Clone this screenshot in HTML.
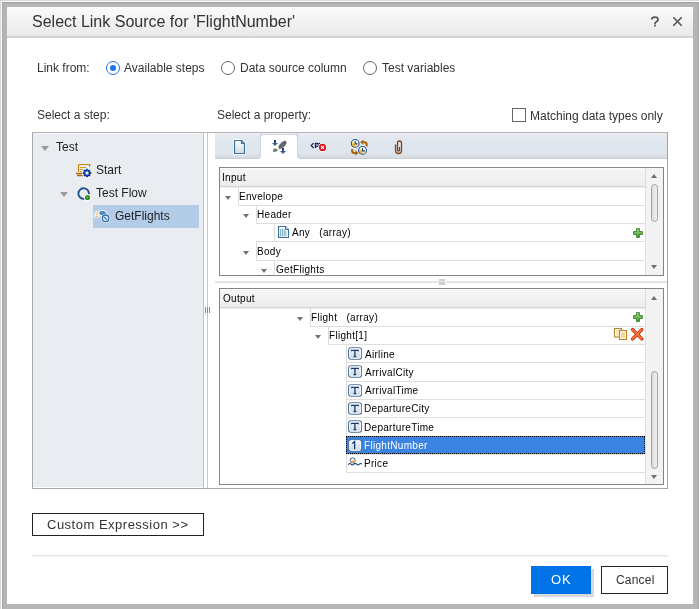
<!DOCTYPE html>
<html><head><meta charset="utf-8">
<style>
*{margin:0;padding:0;box-sizing:border-box}
html,body{width:699px;height:609px;overflow:hidden;background:#fff}
body{position:relative;font-family:"Liberation Sans",sans-serif;color:#333}
.a{position:absolute}
.t{position:absolute;white-space:nowrap;line-height:1}
#f0{left:0;top:0;width:699px;height:609px;background:#d8d8d8}
#f1{left:1px;top:1px;width:698px;height:608px;background:#fdfdfd}
#f2{left:2px;top:2px;width:697px;height:607px;background:#b5b5b5;border-top:1px solid #9e9e9e;border-left:1px solid #a8a8a8;border-right:1px solid #a9a9a9}
#dlg{left:7px;top:7px;width:686px;height:597px;background:#fff}
#title{left:7px;top:7px;width:686px;height:31px;background:linear-gradient(#fbfbfb,#e9e9e9);border-bottom:2px solid #d3d3d3}
.lbl{font-size:12px;color:#333}
.radio{position:absolute;width:14px;height:14px;border-radius:50%;border:1px solid #666;background:#fff}
.radio.on{border:1.5px solid #1a73e8}
.radio.on:after{content:"";position:absolute;left:2.5px;top:2.5px;width:6px;height:6px;border-radius:50%;background:#1a73e8}
#leftp{left:32px;top:132px;width:172px;height:357px;background:#e9ecf1;border:1px solid #b4b4b4;border-right:1px solid #c4c4c4;border-bottom:1px solid #a0a0a0}
#rightp{left:207px;top:132px;width:461px;height:357px;background:#fff;border-top:1px solid #b4b4b4;border-left:1px solid #c8c8c8;border-right:1px solid #9a9a9a;border-bottom:1px solid #a0a0a0}
#tabs{left:215px;top:133px;width:452px;height:26px;background:linear-gradient(#e9edf2,#dde4ec);border-bottom:1px solid #c9cdd3}
#acttab{left:260px;top:134px;width:37px;height:25px;background:#fff;border-radius:4px 4px 0 0;border:1px solid #cfd5dc;border-bottom:none}
.tb{position:absolute;background:#fff;border:1px solid #80868e}
.hd{position:absolute;background:linear-gradient(#f6f6f6,#ededed)}
.sb{position:absolute;background:#f3f3f3}
.gl{position:absolute;background:#dedede}
.tx{position:absolute;font-size:10px;letter-spacing:0.3px;color:#000;white-space:nowrap;line-height:1}
.tri{position:absolute;width:0;height:0;border-left:3.5px solid transparent;border-right:3.5px solid transparent;border-top:4px solid #6f747a}
.ltri{position:absolute;width:0;height:0;border-left:4.5px solid transparent;border-right:4.5px solid transparent;border-top:5px solid #9a9a9a}
.up{position:absolute;width:0;height:0;border-left:3.5px solid transparent;border-right:3.5px solid transparent;border-bottom:4px solid #6a6f75}
.dn{position:absolute;width:0;height:0;border-left:3.5px solid transparent;border-right:3.5px solid transparent;border-top:4px solid #6a6f75}
.th{position:absolute;width:7px;border:1px solid #9ea4ab;border-radius:4px;background:linear-gradient(90deg,#dcdcdc,#f2f2f2)}
.tabbg{background:linear-gradient(#eef0f3 0px,#e8ebef 2px,#e1e7ee 6px,#dfe5ec 20px,#d7dce2 24px)}
.btn{position:absolute;border:1px solid #222;background:#fff}
</style></head><body><div id="root" style="position:absolute;left:0;top:0;width:699px;height:609px;will-change:transform">
<div id="f0" class="a"></div>
<div id="f1" class="a"></div>
<div id="f2" class="a"></div>
<div id="dlg" class="a"></div>
<div class="a" style="left:681px;top:0;width:8px;height:1px;background:#d5dcea"></div>
<div id="title" class="a"></div>
<div class="t" style="left:32px;top:14px;font-size:16px;color:#333">Select Link Source for 'FlightNumber'</div>
<svg class="a" style="left:649px;top:15px" width="12" height="13" viewBox="0 0 12 13"><path d="M2.7 4.6Q2.7 2.2 5.9 2.2Q9 2.2 9 4.5Q9 5.9 7.4 6.8Q6 7.6 6 8.8V9.2" fill="none" stroke="#555" stroke-width="1.7"/><rect x="5.1" y="9.8" width="1.8" height="1.7" fill="#555"/></svg>
<svg class="a" style="left:672px;top:16px" width="11" height="11"><path d="M1.3 1.3L9.7 9.7M9.7 1.3L1.3 9.7" stroke="#555" stroke-width="1.6"/></svg>

<div class="t lbl" style="left:37px;top:62px">Link from:</div>
<div class="radio on" style="left:106px;top:61px"></div>
<div class="t lbl" style="left:124px;top:62px">Available steps</div>
<div class="radio" style="left:221px;top:61px"></div>
<div class="t lbl" style="left:240px;top:62px">Data source column</div>
<div class="radio" style="left:363px;top:61px"></div>
<div class="t lbl" style="left:382px;top:62px">Test variables</div>

<div class="t lbl" style="left:37px;top:109px">Select a step:</div>
<div class="t lbl" style="left:217px;top:109px">Select a property:</div>
<div class="a" style="left:512px;top:108px;width:14px;height:14px;border:1.5px solid #666;background:#fff"></div>
<div class="t lbl" style="left:530px;top:110px">Matching data types only</div>

<div class="a" style="left:32px;top:132px;width:636px;height:357px;background:#fff;border:1px solid #b4b4b4;border-left-color:#a8a8a8;border-right-color:#a4a4a4;border-bottom-color:#a4a4a4"></div>
<div class="a" style="left:33px;top:133px;width:170px;height:354px;background:#e9ecf1;border-top:1px solid #f2f5f9;border-left:1px solid #eef1f5"></div>
<div class="a" style="left:203px;top:133px;width:1px;height:355px;background:#c4c4c4"></div>
<div class="a" style="left:207px;top:133px;width:1px;height:355px;background:#c8c8c8"></div>
<div class="a" style="left:260px;top:133px;width:38px;height:3px;background:#eaedf1"></div>
<div class="a" style="left:260px;top:134px;width:38px;height:24px;background:#fff;border-radius:4px 4px 0 0;border:1px solid #d3d9e0;border-bottom:none"></div>
<div class="a tabbg" style="left:215px;top:133px;width:46px;height:26px;border-right:1px solid #d0d5db;border-bottom:1px solid #c9cdd3;border-bottom-right-radius:4px"></div>
<div class="a tabbg" style="left:297px;top:133px;width:370px;height:26px;border-left:1px solid #d0d5db;border-bottom:1px solid #c9cdd3;border-bottom-left-radius:4px"></div>

<!-- tab icons -->
<svg class="a" style="left:232px;top:138px" width="16" height="18" viewBox="0 0 16 18">
<defs><linearGradient id="gd" x1="0" y1="0" x2="0" y2="1"><stop offset="0" stop-color="#fff"/><stop offset="1" stop-color="#cfdbe8"/></linearGradient></defs>
<path d="M2.5 2.5H9.5L12.5 5.5V15.5H2.5Z" fill="url(#gd)" stroke="#fff" stroke-width="3" stroke-linejoin="round"/>
<path d="M2.5 2.5H9.5L12.5 5.5V15.5H2.5Z" fill="url(#gd)" stroke="#3b6f9e" stroke-width="1.2" stroke-linejoin="round"/>
<path d="M9.5 2.5V5.5H12.5" fill="none" stroke="#3b6f9e" stroke-width="1.2"/>
</svg>
<svg class="a" style="left:270px;top:138px" width="18" height="18" viewBox="0 0 18 18">
<defs><linearGradient id="ga" x1="0" y1="0" x2="0" y2="1"><stop offset="0" stop-color="#0c2a5e"/><stop offset="1" stop-color="#4f80bb"/></linearGradient></defs>
<ellipse cx="12.5" cy="6.9" rx="5.4" ry="2.7" transform="rotate(-45 12.5 6.9)" fill="#55585c" stroke="#fff" stroke-width="0.6"/>
<path d="M10 9.6L14.6 5M11.4 10L15.6 5.8M9.4 8.2L13.4 4.2" stroke="#8a8d91" stroke-width="0.6" fill="none"/>
<path d="M2.8 13.2Q2.6 10.6 5 10.2Q7.2 10 7.9 12.6Q6.4 14 4.6 14.1Q3 14.1 2.8 13.2Z" fill="#55585c" stroke="#fff" stroke-width="0.5"/>
<ellipse cx="5.2" cy="12" rx="1.2" ry="0.8" fill="#8f9296"/>
<path d="M4 2H6V5H8L5 8L2 5H4Z" fill="url(#ga)"/>
<path d="M12 10H14V13H16L13 16L10 13H12Z" fill="url(#ga)"/>
</svg>
<svg class="a" style="left:308px;top:140px" width="22" height="14" viewBox="0 0 22 14">
<path d="M5.6 3.2L3.2 5.6L5.6 8" fill="none" stroke="#14245a" stroke-width="1.2"/>
<path d="M7.5 8V3.5H9.2A1.4 1.4 0 0 1 9.2 6.3H7.5" fill="none" stroke="#14245a" stroke-width="1.3"/>
<circle cx="11.6" cy="3.5" r="0.7" fill="#14245a"/>
<circle cx="14.5" cy="7.4" r="4.5" fill="#fff"/>
<circle cx="14.5" cy="7.4" r="3.6" fill="#e0101a"/>
<path d="M13 5.9L16 8.9M16 5.9L13 8.9" stroke="#fff" stroke-width="1.2"/>
</svg>
<svg class="a" style="left:348px;top:137px" width="22" height="20" viewBox="0 0 22 20">
<defs><radialGradient id="gc" cx="0.3" cy="0.72" r="0.55"><stop offset="0" stop-color="#f0a000"/><stop offset="0.55" stop-color="#fbe07a"/><stop offset="1" stop-color="#fff"/></radialGradient></defs>
<path d="M14.5 5.2H16.5Q18.6 5.2 18.6 7.5V9.5" fill="none" stroke="#a8650a" stroke-width="2.1"/>
<path d="M12.2 5.2L15.2 2.4V8Z" fill="#a8650a"/>
<path d="M4.2 12V14Q4.2 16 6.2 16H8" fill="none" stroke="#a8650a" stroke-width="2.1"/>
<path d="M10.4 16L7.4 13.2V18.8Z" fill="#a8650a"/>
<circle cx="7.2" cy="6.4" r="4.8" fill="#fff"/>
<circle cx="7.2" cy="6.4" r="3.9" fill="url(#gc)" stroke="#1d4a8a" stroke-width="1.1"/>
<path d="M7.2 4V6.9H9.6" fill="none" stroke="#1a3f8a" stroke-width="1.1"/>
<circle cx="14.5" cy="13.4" r="4.8" fill="#fff"/>
<circle cx="14.5" cy="13.4" r="3.9" fill="url(#gc)" stroke="#1d4a8a" stroke-width="1.1"/>
<path d="M14.5 11V13.9H16.9" fill="none" stroke="#1a3f8a" stroke-width="1.1"/>
</svg>
<svg class="a" style="left:392px;top:138px" width="12" height="18" viewBox="0 0 12 18">
<path d="M3.5 6.5V12.5A3 3 0 0 0 9.5 12.5V5A2 2 0 0 0 5.5 5V12A1 1 0 0 0 7.5 12V9" fill="none" stroke="#7a4516" stroke-width="1.3"/>
</svg>
<!-- tree icons -->
<svg class="a" style="left:74px;top:162px" width="20" height="17" viewBox="0 0 20 17">
<path d="M4.5 10V3.5Q4.5 2.5 5.5 2.5H15.5" fill="none" stroke="#c9850f" stroke-width="1.2"/>
<path d="M15 2.5Q16.5 3 15.5 4.5" fill="none" stroke="#a5650c" stroke-width="1.2"/>
<path d="M6 5.5H12M6 7.5H9M6 9.5H8" stroke="#e09a12" stroke-width="1.1"/>
<path d="M2 11.5H9M3 13.5H10" stroke="#b06d10" stroke-width="1.3"/>
<circle cx="13" cy="10.9" r="5.2" fill="#fff"/><rect x="15.30" y="9.90" width="2" height="2" transform="rotate(0 16.30 10.90)" fill="#0a3294"/><rect x="14.33" y="12.23" width="2" height="2" transform="rotate(45 15.33 13.23)" fill="#0a3294"/><rect x="12.00" y="13.20" width="2" height="2" transform="rotate(90 13.00 14.20)" fill="#0a3294"/><rect x="9.67" y="12.23" width="2" height="2" transform="rotate(135 10.67 13.23)" fill="#0a3294"/><rect x="8.70" y="9.90" width="2" height="2" transform="rotate(180 9.70 10.90)" fill="#0a3294"/><rect x="9.67" y="7.57" width="2" height="2" transform="rotate(225 10.67 8.57)" fill="#0a3294"/><rect x="12.00" y="6.60" width="2" height="2" transform="rotate(270 13.00 7.60)" fill="#1e8ee0"/><rect x="14.33" y="7.57" width="2" height="2" transform="rotate(315 15.33 8.57)" fill="#1e8ee0"/><circle cx="13" cy="10.9" r="2.6" fill="#f7f0d8" stroke="#0b3aa0" stroke-width="1.7"/></svg>
<svg class="a" style="left:75px;top:186px" width="17" height="16" viewBox="0 0 17 16">
<path d="M13.6 9.5A5.3 5.3 0 1 0 9.5 12.8" fill="none" stroke="#21558f" stroke-width="1.9"/>
<circle cx="12.5" cy="11.5" r="3.4" fill="#fff"/><circle cx="12.5" cy="11.5" r="2.6" fill="#2a8a1e"/><circle cx="12.3" cy="11.3" r="1.1" fill="#66b850"/>
</svg>

<!-- left tree -->
<div class="ltri" style="left:41px;top:146px"></div>
<div class="t" style="left:56px;top:141px;font-size:12px;color:#222">Test</div>
<div class="t" style="left:96px;top:164px;font-size:12px;color:#222">Start</div>
<div class="ltri" style="left:60px;top:192px"></div>
<div class="t" style="left:96px;top:187px;font-size:12px;color:#222">Test Flow</div>
<div class="a" style="left:93px;top:205px;width:106px;height:23px;background:#b3cde9"></div>
<svg class="a" style="left:93px;top:208px" width="18" height="16" viewBox="0 0 18 16">
<path d="M3.5 4.2H5.2M2.5 6H5.4M1.8 8.3H5.4" stroke="#fff" stroke-width="2.4" stroke-linecap="round"/>
<path d="M3.6 4.2H5.1M2.6 6H5.3M1.9 8.3H5.3" stroke="#f2b320" stroke-width="1.1"/>
<ellipse cx="10" cy="5.4" rx="4.6" ry="3" transform="rotate(18 10 5.4)" fill="#fff"/>
<ellipse cx="9.9" cy="5.3" rx="3.7" ry="2.1" transform="rotate(18 9.9 5.3)" fill="#2b74b4"/>
<ellipse cx="8.8" cy="4.8" rx="1.6" ry="0.8" transform="rotate(18 8.8 4.8)" fill="#6aa6d8"/>
<circle cx="12.6" cy="10.3" r="4.7" fill="#fff"/>
<circle cx="12.6" cy="10.3" r="3.3" fill="#e4eef7" stroke="#2a6aa8" stroke-width="1.3"/>
<path d="M10.9 8.9L13.8 11.8" stroke="#2a6aa8" stroke-width="1.1"/>
</svg>
<div class="t" style="left:115px;top:210px;font-size:12px;color:#222">GetFlights</div>

<!-- input table -->
<div class="tb" style="left:219px;top:167px;width:445px;height:109px"></div>
<div class="hd" style="left:220px;top:168px;width:425px;height:18px"></div>
<div class="gl" style="left:220px;top:186px;width:425px;height:1px;background:#d2d5db"></div><div class="gl" style="left:220px;top:187px;width:425px;height:1px;background:#eceef1"></div><div class="gl" style="left:220px;top:168px;width:425px;height:1px;background:#fcfcfc"></div>
<div class="gl" style="left:645px;top:168px;width:1px;height:107px"></div>
<div class="sb" style="left:646px;top:168px;width:17px;height:107px"></div>
<div class="up" style="left:651px;top:174px"></div>
<div class="th" style="left:651px;top:184px;height:38px"></div>
<div class="dn" style="left:651px;top:265px"></div>
<div class="tx" style="left:222px;top:173px">Input</div>
<div class="gl" style="left:238px;top:205px;width:407px;height:1px"></div>
<div class="gl" style="left:256px;top:223px;width:389px;height:1px"></div>
<div class="gl" style="left:256px;top:241px;width:389px;height:1px"></div>
<div class="gl" style="left:256px;top:260px;width:389px;height:1px"></div>
<div class="gl" style="left:238px;top:187px;width:1px;height:18px"></div>
<div class="gl" style="left:256px;top:206px;width:1px;height:17px"></div>
<div class="gl" style="left:274px;top:224px;width:1px;height:17px"></div>
<div class="gl" style="left:256px;top:242px;width:1px;height:18px"></div>
<div class="gl" style="left:274px;top:261px;width:1px;height:14px"></div>
<div class="tri" style="left:225px;top:196px"></div>
<div class="tx" style="left:239px;top:192px">Envelope</div>
<div class="tri" style="left:243px;top:214px"></div>
<div class="tx" style="left:257px;top:210px">Header</div>
<div class="tx" style="left:292px;top:228px">Any&nbsp;&nbsp;&nbsp;(array)</div>
<div class="tri" style="left:243px;top:251px"></div>
<div class="tx" style="left:257px;top:247px">Body</div>
<div class="tri" style="left:261px;top:269px"></div>
<div class="tx" style="left:276px;top:265px">GetFlights</div>

<!-- splitters -->
<div class="a" style="left:215px;top:281px;width:224px;height:2px;background:#e3e3e3"></div>
<div class="a" style="left:446px;top:281px;width:221px;height:2px;background:#e3e3e3"></div>
<div class="a" style="left:439px;top:279px;width:6px;height:6px;background:linear-gradient(#cfcfcf 0,#cfcfcf 2px,#e6e6e6 2px,#e6e6e6 3px,#cfcfcf 3px)"></div>
<div class="a" style="left:205px;top:307px;width:1px;height:6px;background:#8a8a8a"></div>
<div class="a" style="left:209px;top:307px;width:1px;height:6px;background:#8a8a8a"></div>
<div class="a" style="left:207px;top:307px;width:1px;height:6px;background:#8a8a8a"></div>
<!-- output table -->
<div class="tb" style="left:219px;top:288px;width:445px;height:197px"></div>
<div class="hd" style="left:220px;top:289px;width:425px;height:18px"></div>
<div class="gl" style="left:220px;top:307px;width:425px;height:1px;background:#d2d5db"></div><div class="gl" style="left:220px;top:308px;width:425px;height:1px;background:#eceef1"></div><div class="gl" style="left:220px;top:289px;width:425px;height:1px;background:#fcfcfc"></div>
<div class="gl" style="left:645px;top:289px;width:1px;height:195px"></div>
<div class="sb" style="left:646px;top:289px;width:17px;height:195px"></div>
<div class="up" style="left:651px;top:296px"></div>
<div class="th" style="left:651px;top:371px;height:98px"></div>
<div class="dn" style="left:651px;top:475px"></div>
<div class="tx" style="left:223px;top:294px">Output</div>
<div class="gl" style="left:310px;top:326px;width:335px;height:1px"></div>
<div class="gl" style="left:328px;top:344px;width:317px;height:1px"></div>
<div class="gl" style="left:346px;top:362px;width:299px;height:1px"></div>
<div class="gl" style="left:346px;top:381px;width:299px;height:1px"></div>
<div class="gl" style="left:346px;top:399px;width:299px;height:1px"></div>
<div class="gl" style="left:346px;top:417px;width:299px;height:1px"></div>
<div class="gl" style="left:346px;top:436px;width:299px;height:1px"></div>
<div class="gl" style="left:346px;top:454px;width:299px;height:1px"></div>
<div class="gl" style="left:346px;top:472px;width:299px;height:1px"></div>
<div class="gl" style="left:310px;top:308px;width:1px;height:18px"></div>
<div class="gl" style="left:328px;top:327px;width:1px;height:17px"></div>
<div class="gl" style="left:346px;top:345px;width:1px;height:127px"></div>
<div class="tri" style="left:297px;top:317px"></div>
<div class="tx" style="left:311px;top:313px">Flight&nbsp;&nbsp;&nbsp;(array)</div>
<div class="tri" style="left:315px;top:335px"></div>
<div class="tx" style="left:329px;top:331px">Flight[1]</div>
<div class="tx" style="left:365px;top:350px">Airline</div>
<div class="tx" style="left:365px;top:368px">ArrivalCity</div>
<div class="tx" style="left:365px;top:386px">ArrivalTime</div>
<div class="tx" style="left:364px;top:404px">DepartureCity</div>
<div class="tx" style="left:364px;top:423px">DepartureTime</div>
<div class="a" style="left:346px;top:436px;width:299px;height:18px;background:#3a83e0;border:1px dotted #000"></div>
<div class="tx" style="left:364px;top:441px;color:#fff">FlightNumber</div>
<div class="tx" style="left:364px;top:459px">Price</div>

<svg width="0" height="0" style="position:absolute"><defs><linearGradient id="gt" x1="0" y1="0" x2="0" y2="1"><stop offset="0" stop-color="#f4f7fa"/><stop offset="1" stop-color="#c9d6e2"/></linearGradient><linearGradient id="gp" x1="0" y1="0" x2="0" y2="1"><stop offset="0" stop-color="#a6dc88"/><stop offset="1" stop-color="#4e9e34"/></linearGradient></defs></svg>
<svg class="a" style="left:347px;top:347px" width="15" height="14" viewBox="0 0 15 14"><rect x="1.6" y="0.8" width="13" height="11.4" rx="2.5" fill="url(#gt)" stroke="#4d7295" stroke-width="1.1"/><rect x="2.6" y="1.8" width="11" height="9.4" rx="1.5" fill="none" stroke="#fff" stroke-width="0.8"/><path d="M4.3 3.3H11.5M7.9 3.3V9.4M6.6 9.6H9.2" stroke="#163a6e" stroke-width="1.3"/><path d="M4.3 2.8V4.4M11.5 2.8V4.4" stroke="#163a6e" stroke-width="0.8"/></svg>
<svg class="a" style="left:347px;top:365px" width="15" height="14" viewBox="0 0 15 14"><rect x="1.6" y="0.8" width="13" height="11.4" rx="2.5" fill="url(#gt)" stroke="#4d7295" stroke-width="1.1"/><rect x="2.6" y="1.8" width="11" height="9.4" rx="1.5" fill="none" stroke="#fff" stroke-width="0.8"/><path d="M4.3 3.3H11.5M7.9 3.3V9.4M6.6 9.6H9.2" stroke="#163a6e" stroke-width="1.3"/><path d="M4.3 2.8V4.4M11.5 2.8V4.4" stroke="#163a6e" stroke-width="0.8"/></svg>
<svg class="a" style="left:347px;top:384px" width="15" height="14" viewBox="0 0 15 14"><rect x="1.6" y="0.8" width="13" height="11.4" rx="2.5" fill="url(#gt)" stroke="#4d7295" stroke-width="1.1"/><rect x="2.6" y="1.8" width="11" height="9.4" rx="1.5" fill="none" stroke="#fff" stroke-width="0.8"/><path d="M4.3 3.3H11.5M7.9 3.3V9.4M6.6 9.6H9.2" stroke="#163a6e" stroke-width="1.3"/><path d="M4.3 2.8V4.4M11.5 2.8V4.4" stroke="#163a6e" stroke-width="0.8"/></svg>
<svg class="a" style="left:347px;top:402px" width="15" height="14" viewBox="0 0 15 14"><rect x="1.6" y="0.8" width="13" height="11.4" rx="2.5" fill="url(#gt)" stroke="#4d7295" stroke-width="1.1"/><rect x="2.6" y="1.8" width="11" height="9.4" rx="1.5" fill="none" stroke="#fff" stroke-width="0.8"/><path d="M4.3 3.3H11.5M7.9 3.3V9.4M6.6 9.6H9.2" stroke="#163a6e" stroke-width="1.3"/><path d="M4.3 2.8V4.4M11.5 2.8V4.4" stroke="#163a6e" stroke-width="0.8"/></svg>
<svg class="a" style="left:347px;top:420px" width="15" height="14" viewBox="0 0 15 14"><rect x="1.6" y="0.8" width="13" height="11.4" rx="2.5" fill="url(#gt)" stroke="#4d7295" stroke-width="1.1"/><rect x="2.6" y="1.8" width="11" height="9.4" rx="1.5" fill="none" stroke="#fff" stroke-width="0.8"/><path d="M4.3 3.3H11.5M7.9 3.3V9.4M6.6 9.6H9.2" stroke="#163a6e" stroke-width="1.3"/><path d="M4.3 2.8V4.4M11.5 2.8V4.4" stroke="#163a6e" stroke-width="0.8"/></svg>
<svg class="a" style="left:347px;top:439px" width="15" height="14" viewBox="0 0 15 14"><rect x="1.6" y="0.8" width="13" height="11.4" rx="2.5" fill="url(#gt)" stroke="#4d7295" stroke-width="1.1"/><rect x="2.6" y="1.8" width="11" height="9.4" rx="1.5" fill="none" stroke="#fff" stroke-width="0.8"/><path d="M5.2 4.4L7.6 2.6V10.2" fill="none" stroke="#163a6e" stroke-width="1.3"/></svg>
<svg class="a" style="left:347px;top:455px" width="16" height="13" viewBox="0 0 16 13">
<path d="M1.3 9.8Q2.6 7.6 4 9.2Q5.4 10.8 6.8 9.2Q8.2 7.6 9.6 9.2Q11 10.8 12.4 9.2Q13.6 7.8 14.8 9.2" fill="none" stroke="#1d3f7a" stroke-width="1.1"/>
<circle cx="5.6" cy="5.3" r="2.5" fill="#fff" stroke="#2a4d88" stroke-width="0.9"/>
<path d="M3.4 5.6H7.8V6.6Q7.2 7.6 5.6 7.6Q4 7.6 3.4 6.6Z" fill="#f3b12a"/>
</svg>
<svg class="a" style="left:276px;top:224px" width="15" height="16" viewBox="0 0 15 16">
<path d="M2.5 2.5H9.5L12.5 5.5V13.5H2.5Z" fill="#fff" stroke="#3b6f9e" stroke-width="1.1"/>
<path d="M9.5 2.5V5.5H12.5" fill="#e8eef4" stroke="#3b6f9e" stroke-width="1"/>
<path d="M4.5 5V12.5M6.3 4.5V12.5M8.1 5V12.5M9.9 6.5V12.5" stroke="#8ab6c6" stroke-width="1.2"/>
</svg>
<svg class="a" style="left:632px;top:311px" width="12" height="12" viewBox="0 0 12 12">
<path d="M4.6 1.6H7.4V4.6H10.4V7.4H7.4V10.4H4.6V7.4H1.6V4.6H4.6Z" fill="url(#gp)" stroke="#2d7a1e" stroke-width="0.9"/>
</svg>
<svg class="a" style="left:632px;top:227px" width="12" height="12" viewBox="0 0 12 12">
<path d="M4.6 1.6H7.4V4.6H10.4V7.4H7.4V10.4H4.6V7.4H1.6V4.6H4.6Z" fill="url(#gp)" stroke="#2d7a1e" stroke-width="0.9"/>
</svg>
<svg class="a" style="left:613px;top:327px" width="16" height="15" viewBox="0 0 16 15">
<rect x="1.5" y="1.5" width="7" height="8.5" fill="#fff" stroke="#b48428" stroke-width="1.1"/>
<rect x="3" y="3" width="4" height="5.5" fill="#fbe3b8"/>
<rect x="6.5" y="3.5" width="7" height="9" fill="#fff" stroke="#b48428" stroke-width="1.1"/>
<rect x="8" y="5" width="4" height="6" fill="#f9d89a"/>
</svg>
<svg class="a" style="left:630px;top:327px" width="15" height="15" viewBox="0 0 15 15">
<path d="M2.6 2.6L11.9 11.9M11.9 2.6L2.6 11.9" stroke="#c42a0c" stroke-width="3.4" stroke-linecap="round"/>
<path d="M2.6 2.6L11.9 11.9M11.9 2.6L2.6 11.9" stroke="#f7783a" stroke-width="1.6" stroke-linecap="round"/>
</svg>
<!-- buttons -->
<div class="btn" style="left:32px;top:513px;width:172px;height:23px"></div>
<div class="t" style="left:47px;top:518px;font-size:13px;color:#333;letter-spacing:0.5px">Custom Expression &gt;&gt;</div>
<div class="a" style="left:32px;top:555px;width:636px;height:1px;background:#e6e6e6"></div><div class="a" style="left:32px;top:556px;width:636px;height:1px;background:#f1f1f1"></div>
<div class="a" style="left:534px;top:569px;width:60px;height:28px;background:#d9d9d9"></div>
<div class="a" style="left:531px;top:566px;width:60px;height:28px;background:#0073e7"></div>
<div class="t" style="left:551px;top:573px;font-size:13px;color:#fff;letter-spacing:1px">OK</div>
<div class="btn" style="left:601px;top:566px;width:67px;height:28px;border:1.5px solid #222"></div>
<div class="t" style="left:616px;top:574px;font-size:12px;color:#333;letter-spacing:0.2px">Cancel</div>
</div></body></html>
